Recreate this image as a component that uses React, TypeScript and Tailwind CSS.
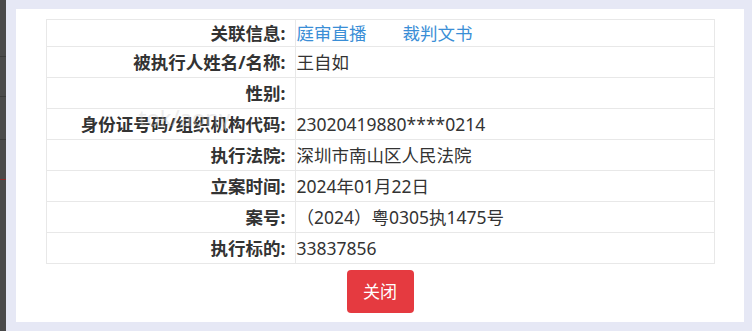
const rows: { label: string; value: React.ReactNode; h: string }[] = [
  {
    label: "关联信息:",
    value: (
      <span className="flex gap-[36px] text-[#3a8ed6]">
        <a href="#">庭审直播</a>
        <a href="#">裁判文书</a>
      </span>
    ),
    h: "h-[26px]",
  },
  { label: "被执行人姓名/名称:", value: "王自如", h: "h-[31px]" },
  { label: "性别:", value: "", h: "h-[31px]" },
  { label: "身份证号码/组织机构代码:", value: "23020419880****0214", h: "h-[31px]" },
  { label: "执行法院:", value: "深圳市南山区人民法院", h: "h-[31px]" },
  { label: "立案时间:", value: "2024年01月22日", h: "h-[31px]" },
  { label: "案号:", value: "（2024）粤0305执1475号", h: "h-[31px]" },
  { label: "执行标的:", value: "33837856", h: "h-[31px]" },
];

export default function App() {
  return (
    <div
      className="flex h-[331px] w-[752px] overflow-hidden bg-[#e6e8f5] text-[17.5px] text-[#333]"
      style={{ fontFamily: '"Noto Sans", "Noto Sans CJK SC", sans-serif' }}
    >
      {/* page behind the dialog */}
      <div className="flex w-[6px] flex-col bg-[#4a4a4a]">
        <div className="h-[19px]" />
        <div className="h-[38px] border-b border-[#3a3a3a]" />
        <div className="h-[40px] border-b border-[#3a3a3a]" />
        <div className="h-[43px] border-b border-[#3a3a3a]" />
        <div className="h-[40px] border-b border-[#8a2a2a]" />
      </div>

      <div className="ml-[10px] mt-[9px] flex h-[313px] w-[728px] flex-col items-center bg-white">
        <div className="relative mt-[10px] w-[669px] border border-[#e8e8e8]">
          {rows.map((r, i) => (
            <div
              key={i}
              className={`flex ${r.h} ${i > 0 ? "border-t border-[#e8e8e8]" : ""}`}
            >
              <div className="flex w-[249px] items-center justify-end border-r border-[#e8e8e8] pr-[9px] font-bold whitespace-nowrap">
                {r.label}
              </div>
              <div className="flex flex-1 items-center pl-[1px] whitespace-nowrap">{r.value}</div>
            </div>
          ))}
          <span className="pointer-events-none absolute left-[92px] top-[86px] text-[22px] leading-none text-[#d0d0d0] opacity-40">
            tok/aony
          </span>
        </div>
        <button className="mt-[6px] h-[43px] w-[67px] rounded-[4px] bg-[#e53a40] text-[17px] text-white">
          关闭
        </button>
      </div>
    </div>
  );
}
